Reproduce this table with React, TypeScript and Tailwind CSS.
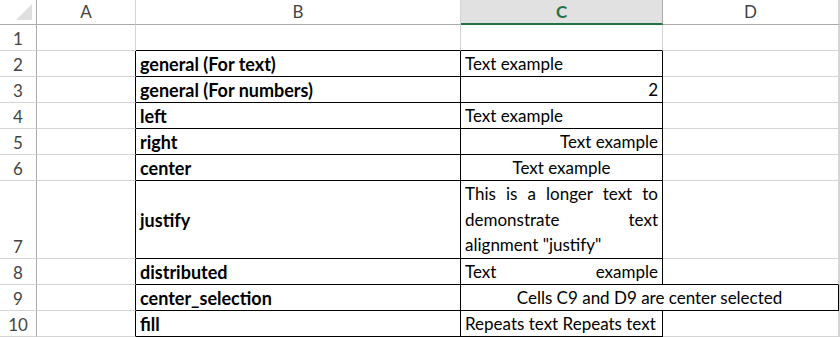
import React from 'react'

// cell kinds: column B labels are bold, column C holds the alignment demo
interface RowProps {
  n: number,
  h: string,
  label: string,
  body: React.ReactNode,
}

const grid = 'grid grid-cols-[37px_99px_325px_202px_176px_1fr]'
const gridLine = 'border-r border-b border-[#d4d4d4]'

function Header() {
  const cols = ['A', 'B', 'C', 'D', '']
  return (
    <div className={`${grid} h-[25px]`}>
      <div className="relative border-r border-b border-[#ababab]">
        <svg className="absolute right-[4px] bottom-[4px]" width="16" height="16" viewBox="0 0 16 16">
          <polygon points="16,0 16,16 0,16" fill="#dfdfdf" />
        </svg>
      </div>
      {cols.map(c =>
        c === 'C' ? (
          <div key={c} className="flex items-center justify-center bg-[#e1e1e1] border-r border-[#ababab] border-b-2 border-b-[#217346] font-bold text-[#217346]">
            {c}
          </div>
        ) : (
          <div key={c} className="flex items-center justify-center border-r border-[#d4d4d4] border-b border-b-[#ababab] text-[#444444]">
            {c}
          </div>
        )
      )}
    </div>
  )
}

function Row({n, h, label, body}: RowProps) {
  const boxed = n >= 2
  return (
    <div className={`${grid} ${h}`}>
      <div className="flex items-end justify-center pb-[1px] border-r border-b border-r-[#ababab] border-b-[#d4d4d4] text-[#444444]">
        {n}
      </div>
      <div className={boxed ? 'border-b border-b-[#d4d4d4] border-r border-r-black' : gridLine}></div>
      <div className={`flex items-center pl-[4px] font-bold text-[18px] border-r border-b ${boxed ? 'border-black' : 'border-r-[#d4d4d4] border-b-black'}`}>
        {label}
      </div>
      {body}
      {n !== 9 && <div className={n === 8 ? 'border-r border-r-[#d4d4d4] border-b border-b-black' : gridLine}></div>}
      <div className={gridLine}></div>
    </div>
  )
}

const cBox = 'border-r border-b border-black px-[4px] flex items-center'

export default function App() {
  const rows: RowProps[] = [
    {n: 1, h: 'h-[26px]', label: '', body: <div className={`${gridLine} border-b-black`}></div>},
    {n: 2, h: 'h-[26px]', label: 'general (For text)', body: <div className={cBox}>Text example</div>},
    {n: 3, h: 'h-[26px]', label: 'general (For numbers)', body: <div className={`${cBox} justify-end`}>2</div>},
    {n: 4, h: 'h-[26px]', label: 'left', body: <div className={cBox}>Text example</div>},
    {n: 5, h: 'h-[26px]', label: 'right', body: <div className={`${cBox} justify-end`}>Text example</div>},
    {n: 6, h: 'h-[26px]', label: 'center', body: <div className={`${cBox} justify-center`}>Text example</div>},
    {n: 7, h: 'h-[78px]', label: 'justify', body: (
      <div className="border-r border-b border-black px-[4px] flex flex-col justify-start leading-[25.6px]">
        <div className="text-justify [text-align-last:justify]">This is a longer text to</div>
        <div className="text-justify [text-align-last:justify]">demonstrate text</div>
        <div>alignment "justify"</div>
      </div>
    )},
    {n: 8, h: 'h-[26px]', label: 'distributed', body: <div className={`${cBox} justify-between`}><span>Text</span><span>example</span></div>},
    {n: 9, h: 'h-[26px]', label: 'center_selection', body: <div className={`${cBox} col-span-2 justify-center`}>Cells C9 and D9 are center selected</div>},
    {n: 10, h: 'h-[26px]', label: 'fill', body: <div className={cBox}>Repeats text Repeats text</div>},
  ]

  return (
    <div className="w-[840px] h-[337px] overflow-hidden bg-white text-black text-[17px] leading-[20px] font-['Lato',sans-serif]">
      <Header />
      {rows.map(r => <Row key={r.n} {...r} />)}
    </div>
  )
}
